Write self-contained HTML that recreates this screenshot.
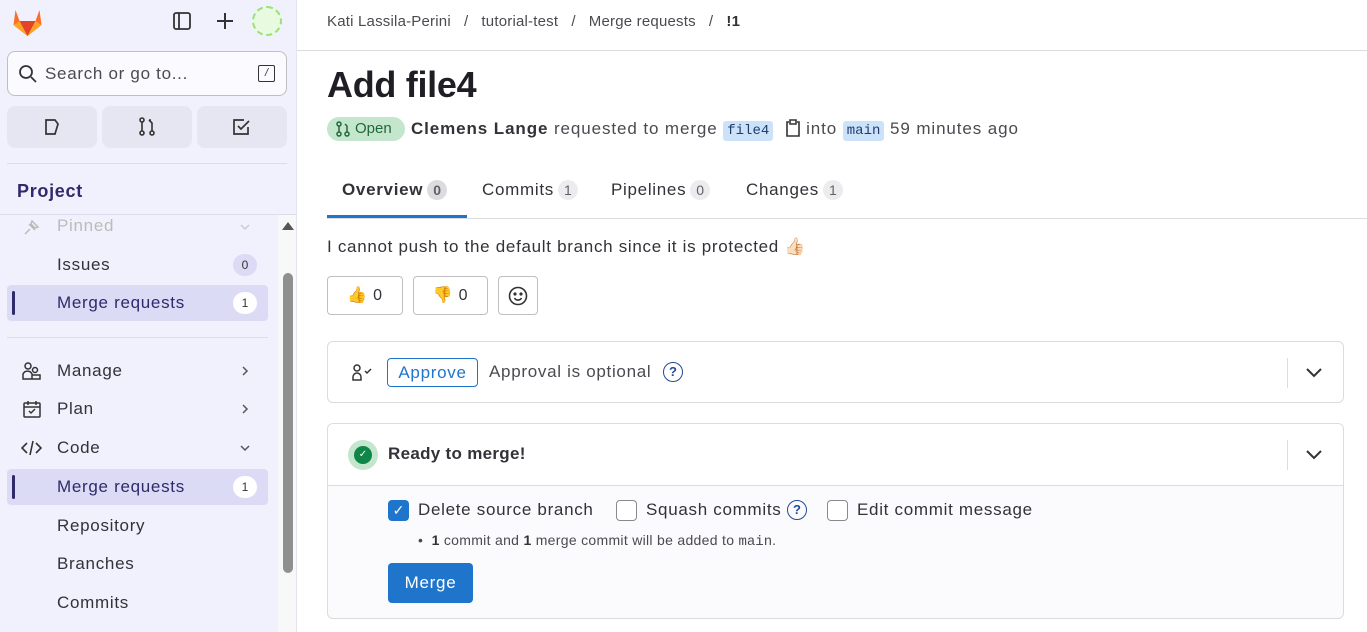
<!DOCTYPE html>
<html><head><meta charset="utf-8"><style>
*{box-sizing:border-box;margin:0;padding:0}
body{width:1367px;height:632px;overflow:hidden;font-family:"Liberation Sans",sans-serif;color:#333238;background:#fff;position:relative;font-size:16px;letter-spacing:0.7px}
.sb{position:absolute;left:0;top:0;width:297px;height:632px;background:#f1f1fd;border-right:1px solid #e4e4ee}
.abs{position:absolute}
.search{left:7px;top:51px;width:280px;height:45px;border:1px solid #bfbfc3;border-radius:8px;background:#fbfbff}
.qb{top:106px;width:90px;height:42px;background:#e6e6f2;border-radius:8px}
.item{position:absolute;left:57px;font-size:17px;color:#333238}
.act{position:absolute;left:7px;width:261px;height:36px;background:#dbdbf5;border-radius:4px}
.act:before{content:"";position:absolute;left:5px;top:6px;width:3px;height:24px;background:#2f2a6b;border-radius:2px}
.badge{position:absolute;left:233px;width:24px;height:22px;border-radius:11px;background:#fff;font-size:12px;text-align:center;line-height:22px;color:#333;letter-spacing:0}
.chev{position:absolute;left:239px}
.tab{position:absolute;top:180px;font-size:17px;color:#333238}
.cnt{display:inline-block;background:#ececef;border-radius:12px;padding:2px 6px;font-size:14px;color:#626168;margin-left:4px;letter-spacing:0}
code{font-family:"Liberation Mono",monospace;font-size:14px;background:#cbe2f9;color:#1f3e6e;padding:2px 4px;border-radius:3px;letter-spacing:0}
.rb{position:absolute;top:276px;height:39px;border:1px solid #bfbfc3;border-radius:4px;font-size:16px;line-height:37px;text-align:center}
.card{position:absolute;left:327px;width:1017px;border:1px solid #dcdcde;border-radius:6px}
.cb{position:absolute;width:21px;height:21px;border:1px solid #89888d;border-radius:4px;background:#fff}
</style></head><body>
<div class="sb">
 <svg class="abs" style="left:11px;top:6px" width="33" height="32" viewBox="0 0 32 32"><path d="M16 30L2 19l2-15 4 11h16l4-11 2 15z" fill="#fc6d26"/><path d="M16 30L8 15h16z" fill="#e24329"/><path d="M2 19l6-4 8 15z M30 19l-6-4-8 15z" fill="#fca326"/></svg>
 <svg class="abs" style="left:172px;top:11px" width="20" height="20" viewBox="0 0 20 20" fill="none" stroke="#333" stroke-width="1.8"><rect x="2" y="2" width="16" height="16" rx="2"/><path d="M7 2v16"/></svg>
 <svg class="abs" style="left:216px;top:12px" width="18" height="18" viewBox="0 0 18 18" stroke="#333" stroke-width="2"><path d="M9 1v16M1 9h16"/></svg>
 <div class="abs" style="left:252px;top:6px;width:30px;height:30px;border-radius:50%;background:#e8fbe0;border:2px dashed #9be07a"></div>
 <div class="abs search"><svg class="abs" style="left:10px;top:12px" width="20" height="20" viewBox="0 0 20 20" fill="none" stroke="#333" stroke-width="1.8"><circle cx="8" cy="8" r="6"/><path d="M13 13l5 5"/></svg>
 <div class="abs" style="left:37px;top:12px;font-size:17px;color:#4b4a50">Search or go to...</div>
 <div class="abs" style="left:250px;top:13px;width:17px;height:17px;border:1.5px solid #333;border-radius:2px;font-size:11px;text-align:center;line-height:14px;font-style:italic;letter-spacing:0">/</div></div>
 <div class="abs qb" style="left:7px"><svg class="abs" style="left:36px;top:12px" width="18" height="18" viewBox="0 0 18 18" fill="none" stroke="#333" stroke-width="1.7"><path d="M3 2h9l3 4-3 10H3z"/></svg></div>
 <div class="abs qb" style="left:102px"><svg class="abs" style="left:36px;top:11px" width="18" height="20" viewBox="0 0 18 20" fill="none" stroke="#333" stroke-width="1.6"><circle cx="4" cy="16" r="2"/><circle cx="14" cy="16" r="2"/><circle cx="4" cy="3" r="2"/><path d="M4 5v9M14 14V6l-3-3M11 3l2 0"/></svg></div>
 <div class="abs qb" style="left:197px"><svg class="abs" style="left:35px;top:12px" width="19" height="18" viewBox="0 0 19 18" fill="none" stroke="#333" stroke-width="1.7"><path d="M16 9v7H2V2h10"/><path d="M6 8l3 3 8-8"/></svg></div>
 <div class="abs" style="left:7px;top:163px;width:280px;height:1px;background:#dcdcea"></div>
 <div class="abs" style="left:17px;top:181px;font-size:18px;font-weight:bold;color:#2f2a6b">Project</div>
 <div class="abs" style="left:0;top:214px;width:297px;height:1px;background:#dcdcea"></div>
 <div class="abs" style="left:278px;top:215px;width:18px;height:417px;background:#f8f8f8"></div>
 <div class="abs" style="left:282px;top:222px;width:0;height:0;border-left:6px solid transparent;border-right:6px solid transparent;border-bottom:8px solid #555"></div>
 <div class="abs" style="left:283px;top:273px;width:10px;height:300px;background:#8f8f8f;border-radius:5px"></div>
 <svg class="abs" style="left:23px;top:218px" width="18" height="18" viewBox="0 0 18 18" fill="none" stroke="#bbb" stroke-width="1.5"><path d="M2 16l5-5M6 6l6 6M9 3l6 6-3 1-4-4z"/></svg>
 <div class="item" style="top:216px;color:#bbb">Pinned</div>
 <svg class="chev" style="top:221px" width="12" height="12" viewBox="0 0 12 12" fill="none" stroke="#ccc" stroke-width="1.5"><path d="M2 4l4 4 4-4"/></svg>
 <div class="item" style="top:255px">Issues</div><div class="badge" style="top:254px;background:#dbdbf5">0</div>
 <div class="act" style="top:285px"></div><div class="item" style="top:293px;color:#2f2a6b">Merge requests</div><div class="badge" style="top:292px">1</div>
 <div class="abs" style="left:7px;top:337px;width:261px;height:1px;background:#dcdcea"></div>
 <svg class="abs" style="left:22px;top:362px" width="19" height="18" viewBox="0 0 19 18" fill="none" stroke="#333" stroke-width="1.5"><circle cx="6" cy="4" r="3"/><circle cx="13" cy="8" r="2.5"/><path d="M1 17v-5a5 5 0 0 1 9 0v5zM10 17v-4h8v4z"/></svg>
 <div class="item" style="top:361px">Manage</div>
 <svg class="chev" style="top:365px" width="12" height="12" viewBox="0 0 12 12" fill="none" stroke="#555" stroke-width="1.5"><path d="M4 2l4 4-4 4"/></svg>
 <svg class="abs" style="left:23px;top:400px" width="18" height="18" viewBox="0 0 18 18" fill="none" stroke="#333" stroke-width="1.5"><rect x="1" y="3" width="16" height="14" rx="1"/><path d="M1 7h16M5 1v4M13 1v4M6 11l2 2 4-4"/></svg>
 <div class="item" style="top:399px">Plan</div>
 <svg class="chev" style="top:403px" width="12" height="12" viewBox="0 0 12 12" fill="none" stroke="#555" stroke-width="1.5"><path d="M4 2l4 4-4 4"/></svg>
 <svg class="abs" style="left:21px;top:439px" width="21" height="18" viewBox="0 0 21 18" fill="none" stroke="#333" stroke-width="1.6"><path d="M6 4L1 9l5 5M15 4l5 5-5 5M12 2L9 16"/></svg>
 <div class="item" style="top:438px">Code</div>
 <svg class="chev" style="top:442px" width="12" height="12" viewBox="0 0 12 12" fill="none" stroke="#555" stroke-width="1.5"><path d="M2 4l4 4 4-4"/></svg>
 <div class="act" style="top:469px"></div><div class="item" style="top:477px;color:#2f2a6b">Merge requests</div><div class="badge" style="top:476px">1</div>
 <div class="item" style="top:516px">Repository</div>
 <div class="item" style="top:554px">Branches</div>
 <div class="item" style="top:593px">Commits</div>
</div>
<div class="abs" style="left:297px;top:50px;width:1070px;height:1px;background:#dcdcde"></div>
<div class="abs" style="left:327px;top:13px;font-size:15px;color:#4b4a50;letter-spacing:0.2px">Kati Lassila-Perini &nbsp;&nbsp;/&nbsp;&nbsp; tutorial-test &nbsp;&nbsp;/&nbsp;&nbsp; Merge requests &nbsp;&nbsp;/&nbsp;&nbsp; <b style="color:#333">!1</b></div>
<div class="abs" style="left:327px;top:64px;font-size:36px;font-weight:bold;color:#1f1e24;letter-spacing:-0.3px">Add file4</div>
<div class="abs" style="left:327px;top:117px;width:78px;height:24px;background:#c3e6cd;border-radius:12px;font-size:15px;color:#24663b;line-height:24px;padding-left:28px;letter-spacing:0">Open<svg class="abs" style="left:9px;top:4px" width="14" height="16" viewBox="0 0 14 16" fill="none" stroke="#24663b" stroke-width="1.5"><circle cx="3" cy="13" r="2"/><circle cx="11" cy="13" r="2"/><circle cx="3" cy="3" r="2"/><path d="M3 5v6M11 11V5L9 3"/></svg></div>
<div class="abs" style="left:411px;top:119px;font-size:17px;color:#4b4a50;white-space:nowrap;letter-spacing:0.9px"><b style="color:#333238">Clemens Lange</b> requested to merge <code>file4</code> &nbsp;<svg width="16" height="18" viewBox="0 0 16 18" fill="none" stroke="#333" stroke-width="1.6" style="vertical-align:-3px"><path d="M4 3H2v14h12V3h-2M5 1h6v4H5z"/></svg> into <code>main</code> 59 minutes ago</div>
<div class="tab" style="left:342px;font-weight:bold">Overview<span class="cnt" style="background:#dcdcde">0</span></div>
<div class="abs" style="left:327px;top:215px;width:140px;height:3px;background:#1f75cb"></div>
<div class="tab" style="left:482px">Commits<span class="cnt">1</span></div>
<div class="tab" style="left:611px">Pipelines<span class="cnt">0</span></div>
<div class="tab" style="left:746px">Changes<span class="cnt">1</span></div>
<div class="abs" style="left:327px;top:218px;width:1040px;height:1px;background:#dcdcde"></div>
<div class="abs" style="left:327px;top:237px;font-size:17px">I cannot push to the default branch since it is protected 👍🏻</div>
<div class="rb" style="left:327px;width:76px">👍 0</div>
<div class="rb" style="left:413px;width:75px">👎 0</div>
<div class="rb" style="left:498px;width:40px"><svg width="20" height="20" viewBox="0 0 20 20" fill="none" stroke="#333" stroke-width="1.6" style="margin-top:9px"><circle cx="10" cy="10" r="8.5"/><path d="M6.5 12a4 4 0 0 0 7 0"/><circle cx="7" cy="8" r=".8" fill="#333"/><circle cx="13" cy="8" r=".8" fill="#333"/></svg></div>
<div class="card" style="top:341px;height:62px">
 <svg class="abs" style="left:23px;top:21px" width="22" height="18" viewBox="0 0 22 18" fill="none" stroke="#333" stroke-width="1.5"><circle cx="6" cy="5" r="3"/><path d="M2 17v-3a4 4 0 0 1 8 0v3z"/><path d="M14 8l2 2 4-4"/></svg>
 <div class="abs" style="left:59px;top:16px;width:91px;height:29px;border:1px solid #1f75cb;border-radius:4px;color:#1f75cb;font-size:17px;text-align:center;line-height:27px">Approve</div>
 <div class="abs" style="left:161px;top:20px;font-size:17px;color:#4b4a50">Approval is optional</div>
 <div class="abs" style="left:335px;top:20px;width:20px;height:20px;border:1.7px solid #1f4b99;border-radius:50%;color:#1f4b99;font-size:13px;text-align:center;line-height:17px;font-weight:bold;letter-spacing:0">?</div>
 <div class="abs" style="left:959px;top:16px;width:1px;height:30px;background:#dcdcde"></div>
 <svg class="abs" style="left:977px;top:23px" width="18" height="14" viewBox="0 0 18 14" fill="none" stroke="#333" stroke-width="2"><path d="M2 4l7 7 7-7"/></svg>
</div>
<div class="card" style="top:423px;height:196px;background:#fbfafd;overflow:hidden">
 <div class="abs" style="left:0;top:0;width:100%;height:62px;background:#fff;border-bottom:1px solid #dcdcde"></div>
 <div class="abs" style="left:20px;top:16px;width:30px;height:30px;border-radius:50%;background:#c3e6cd"></div>
 <div class="abs" style="left:26px;top:22px;width:18px;height:18px;border-radius:50%;background:#108548;color:#fff;font-size:10px;text-align:center;line-height:18px;letter-spacing:0">✓</div>
 <div class="abs" style="left:60px;top:20px;font-size:17px;font-weight:bold;letter-spacing:0.3px">Ready to merge!</div>
 <div class="abs" style="left:959px;top:16px;width:1px;height:30px;background:#dcdcde"></div>
 <svg class="abs" style="left:977px;top:23px" width="18" height="14" viewBox="0 0 18 14" fill="none" stroke="#333" stroke-width="2"><path d="M2 4l7 7 7-7"/></svg>
 <div class="cb" style="left:60px;top:76px;background:#1f75cb;border-color:#1f75cb;color:#fff;font-size:14px;text-align:center;line-height:19px;letter-spacing:0">✓</div>
 <div class="abs" style="left:90px;top:76px;font-size:17px">Delete source branch</div>
 <div class="cb" style="left:288px;top:76px"></div>
 <div class="abs" style="left:318px;top:76px;font-size:17px">Squash commits</div>
 <div class="abs" style="left:459px;top:76px;width:20px;height:20px;border:1.7px solid #1f4b99;border-radius:50%;color:#1f4b99;font-size:13px;text-align:center;line-height:17px;font-weight:bold;letter-spacing:0">?</div>
 <div class="cb" style="left:499px;top:76px"></div>
 <div class="abs" style="left:529px;top:76px;font-size:17px">Edit commit message</div>
 <div class="abs" style="left:90px;top:108px;font-size:14px;color:#4b4a50;letter-spacing:0.3px">• &nbsp;<b style="color:#333">1</b> commit and <b style="color:#333">1</b> merge commit will be added to <span style="font-family:'Liberation Mono',monospace;letter-spacing:0">main</span>.</div>
 <div class="abs" style="left:60px;top:139px;width:85px;height:40px;background:#1f75cb;border-radius:4px;color:#fff;font-size:17px;text-align:center;line-height:40px">Merge</div>
</div>
</body></html>
